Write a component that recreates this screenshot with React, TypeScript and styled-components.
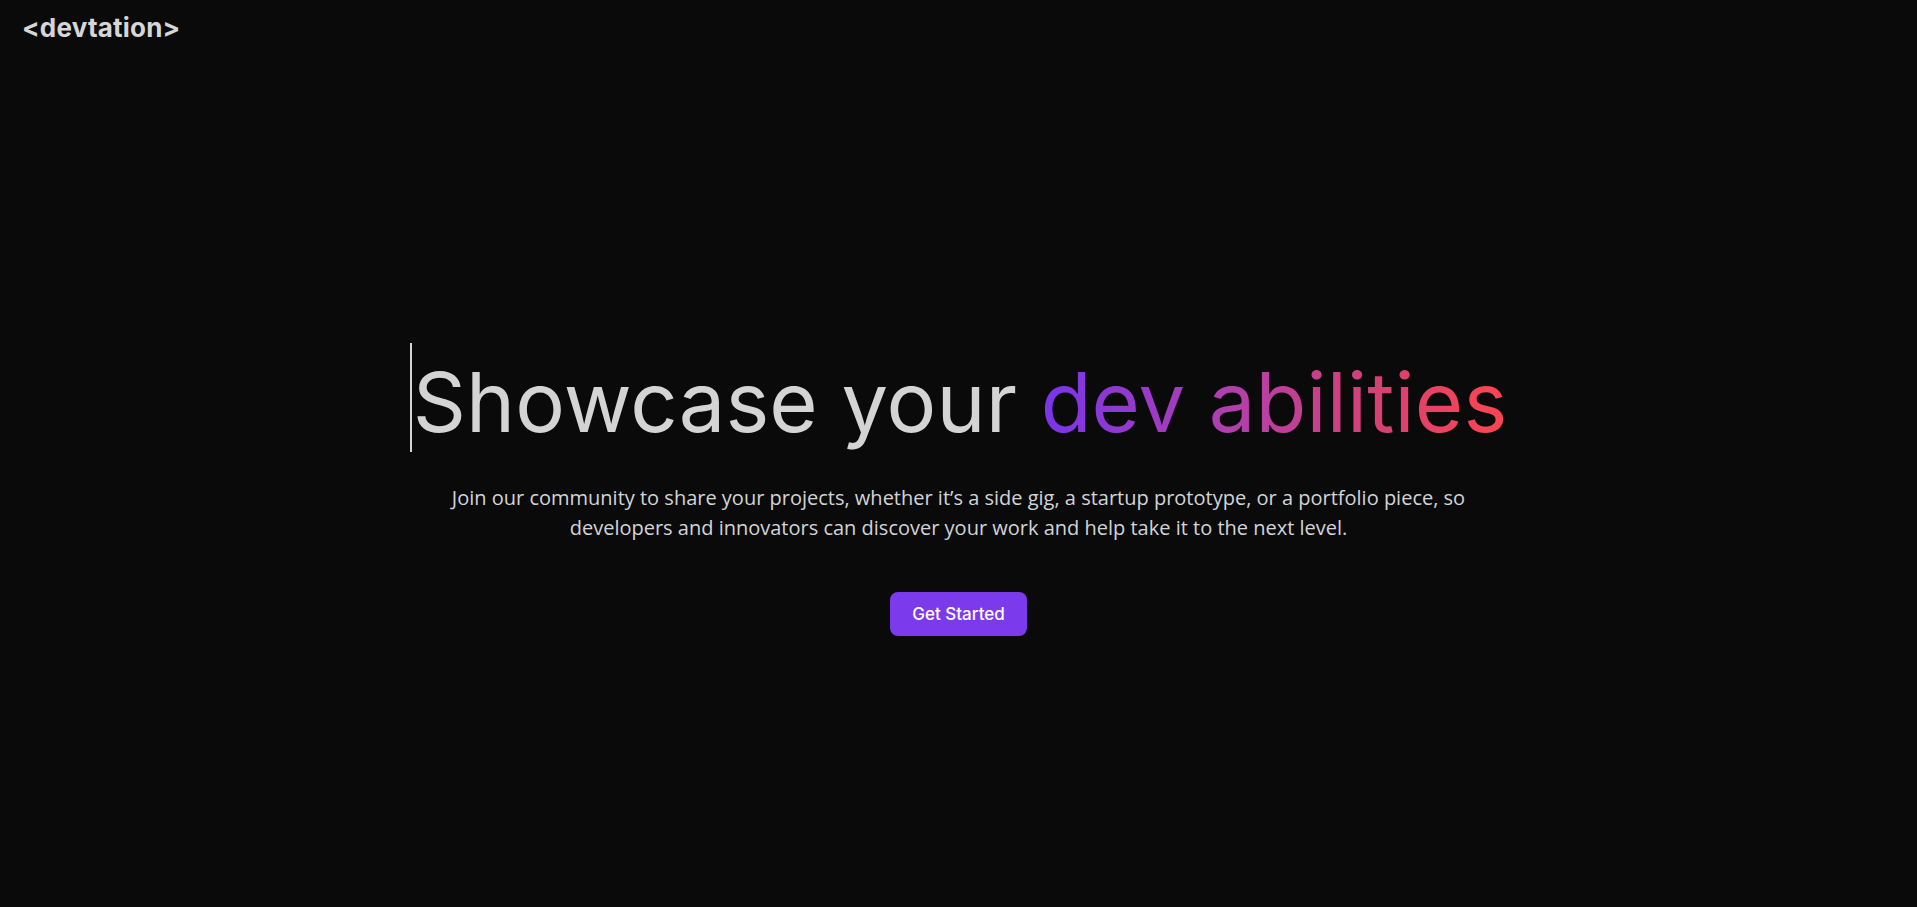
import styled, { createGlobalStyle } from 'styled-components';

const GlobalStyle = createGlobalStyle`
	html,
	body {
		margin: 0;
		padding: 0;
		background: #0a0a0a;
	}

	* {
		box-sizing: border-box;
	}

	::-webkit-scrollbar {
		width: 4px;
	}

	::-webkit-scrollbar-track {
		background: #0a0a0a;
	}

	::-webkit-scrollbar-thumb {
		background: #888888;
	}
`;

const App: React.FunctionComponent = () => {
	return (
		<PageStyles>
			<GlobalStyle />
			<HeaderStyles>
				<Logo>&lt;devtation&gt;</Logo>
			</HeaderStyles>
			<HeroStyles>
				<Heading>
					<Caret />
					Showcase your <Gradient>dev abilities</Gradient>
				</Heading>
				<Lead>
					Join our community to share your projects, whether it’s a side gig, a startup prototype, or a
					portfolio piece, so developers and innovators can discover your work and help take it to the
					next level.
				</Lead>
				<CtaButton type="button">Get Started</CtaButton>
			</HeroStyles>
		</PageStyles>
	);
};

const PageStyles = styled.div`
	min-height: 100vh;
	background: #0a0a0a;
	color: #d4d4d4;
`;

const HeaderStyles = styled.header`
	display: flex;
	align-items: center;
	height: 57px;
	padding: 0 22px 3px;
`;

const Logo = styled.a`
	font-family: 'Inter', 'Liberation Sans', sans-serif;
	font-size: 26px;
	font-weight: 700;
	letter-spacing: 0.2px;
	color: #d6d6d6;
	text-decoration: none;
`;

const HeroStyles = styled.main`
	display: flex;
	flex-direction: column;
	align-items: center;
	justify-content: center;
	min-height: 100vh;
	padding: 0 24px 45px;
	text-align: center;
`;

const Heading = styled.h1`
	margin: 0;
	font-family: 'Inter', 'Liberation Sans', sans-serif;
	font-size: 83px;
	font-weight: 400;
	line-height: 1.5;
	letter-spacing: 0.15px;
	color: #d4d4d4;
`;

const Caret = styled.span`
	display: inline-block;
	width: 2px;
	height: 109px;
	margin-right: 1px;
	vertical-align: -20px;
	background: #d4d4d4;
`;

const Gradient = styled.span`
	background: linear-gradient(90deg, #7a34ea 0%, #b13fae 40%, #d9416f 75%, #ff4550 100%);
	-webkit-background-clip: text;
	background-clip: text;
	color: transparent;
`;

const Lead = styled.p`
	max-width: 1060px;
	margin: 19px 0 0;
	font-family: 'Open Sans', 'Liberation Sans', sans-serif;
	font-size: 20px;
	line-height: 30px;
	color: #d2d4d8;
`;

const CtaButton = styled.button`
	margin-top: 49px;
	height: 44px;
	padding: 0 22px;
	border: none;
	border-radius: 8px;
	background: #7c3aed;
	font-family: 'Inter', 'Liberation Sans', sans-serif;
	font-size: 17px;
	font-weight: 500;
	color: #ffffff;
	cursor: pointer;
`;

export default App;
